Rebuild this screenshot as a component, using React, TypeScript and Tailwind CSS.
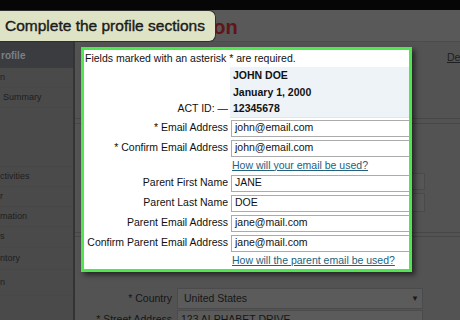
const sidebarItems = [
  { text: "n", h: "h-[20px]", pl: "pl-0" },
  { text: "Summary", h: "h-[20px]", pl: "pl-[3px]" },
  { text: "", h: "h-[59px]", pl: "pl-0" },
  { text: "ctivities", h: "h-[20px]", pl: "pl-0" },
  { text: "r", h: "h-[20px]", pl: "pl-0" },
  { text: "mation", h: "h-[20px]", pl: "pl-0" },
  { text: "s", h: "h-[21px]", pl: "pl-0" },
  { text: "ntory", h: "h-[22px]", pl: "pl-0" },
  { text: "n", h: "h-[26px]", pl: "pl-0" },
];

const infoRows = [
  { label: "", value: "JOHN DOE", h: "h-[17px]" },
  { label: "", value: "January 1, 2000", h: "h-[17px]" },
  { label: "ACT ID: \u2014", value: "12345678", h: "h-[16px]" },
];

type Row = { kind: "input" | "link"; label?: string; value: string };

const formRows: Row[] = [
  { kind: "input", label: "* Email Address", value: "john@email.com" },
  { kind: "input", label: "* Confirm Email Address", value: "john@email.com" },
  { kind: "link", value: "How will your email be used?" },
  { kind: "input", label: "Parent First Name", value: "JANE" },
  { kind: "input", label: "Parent Last Name", value: "DOE" },
  { kind: "input", label: "Parent Email Address", value: "jane@mail.com" },
  { kind: "input", label: "Confirm Parent Email Address", value: "jane@mail.com" },
  { kind: "link", value: "How will the parent email be used?" },
];

function Sidebar() {
  return (
    <aside className="flex w-[75px] shrink-0 flex-col overflow-hidden border-r-2 border-[#343434] bg-[#4a4a4a] text-[9px] text-[#1e1e1e]">
      <div className="flex h-[26px] items-center bg-[#3a3c3f] pl-px text-[10px] font-bold text-[#7b8086]">rofile</div>
      {sidebarItems.map((it, i) => (
        <div key={i} className={`flex ${it.h} ${it.pl} items-center whitespace-nowrap border-b border-[#474747]`}>
          {it.text}
        </div>
      ))}
    </aside>
  );
}

function Panel() {
  return (
    <div className="absolute left-[6px] top-[5px] h-[225px] w-[331px] overflow-hidden border-[3px] border-[#4fe64f] bg-white text-[10.5px] text-[#111] shadow-[3px_3px_5px_rgba(0,0,0,0.55)]">
      <div className="flex h-[17px] items-center pl-px whitespace-nowrap">
        Fields marked with an asterisk * are required.
      </div>
      {infoRows.map((r, i) => (
        <div key={i} className={`flex ${r.h} items-center`}>
          <div className="w-[144px] shrink-0 text-right whitespace-nowrap">{r.label}</div>
          <div className="ml-[2px] flex h-full flex-1 items-center bg-[#eef3f7] pl-[3px] font-bold">{r.value}</div>
        </div>
      ))}
      <div className="ml-[146px] h-px bg-[#ebe6d2]" />
      {formRows.map((r, i) =>
        r.kind === "input" ? (
          <div key={i} className="flex h-[20px] items-center">
            <div className="w-[144px] shrink-0 text-right whitespace-nowrap">{r.label}</div>
            <div className="ml-[3px] flex h-[17px] w-[190px] shrink-0 items-center border border-[#ababab] bg-white pl-[3px]">
              {r.value}
            </div>
          </div>
        ) : (
          <div key={i} className="flex h-[15px] items-center pl-[148px]">
            <a className="whitespace-nowrap text-[#21627e] underline">{r.value}</a>
          </div>
        )
      )}
    </div>
  );
}

function BackgroundForm() {
  return (
    <div className="flex flex-col text-[10.5px] text-[#161616]">
      <div className="mt-[6px] flex h-[20px] items-center pl-[372px]">
        <a className="whitespace-nowrap text-[#1f1f1f] underline">Details</a>
      </div>
      <div className="mt-[50px] h-[6px] border-y border-[#474747]" />
      <div className="mt-[49px] flex h-[17px] items-center">
        <div className="w-[97px] shrink-0" />
        <div className="ml-[5px] h-full w-[248px] shrink-0 border border-[#4a4a4a] bg-[#565656]" />
      </div>
      <div className="mt-[3px] flex h-[19px] items-center">
        <div className="w-[97px] shrink-0" />
        <div className="ml-[5px] h-full w-[248px] shrink-0 border border-[#4a4a4a] bg-[#565656]" />
      </div>
      <div className="mt-[20px] h-[5px] border-y border-[#474747]" />
      <div className="mt-[51px] flex h-[21px] items-center">
        <div className="w-[97px] shrink-0 text-right whitespace-nowrap">* Country</div>
        <div className="ml-[5px] flex h-full w-[246px] shrink-0 items-center justify-between border border-[#4b4b4b] bg-[#5b5b5b] pl-[6px] pr-[3px]">
          <span className="whitespace-nowrap">United States</span>
          <span className="text-[8px] text-[#1a1a1a]">{"\u25BC"}</span>
        </div>
      </div>
      <div className="mt-px flex h-[20px] items-center">
        <div className="w-[97px] shrink-0 text-right whitespace-nowrap">* Street Address</div>
        <div className="ml-[5px] flex h-full w-[246px] shrink-0 items-center border border-[#4b4b4b] bg-[#5b5b5b] pl-[3px]">
          <span className="whitespace-nowrap">123 ALPHABET DRIVE</span>
        </div>
      </div>
    </div>
  );
}

export default function App() {
  return (
    <div className="relative flex h-[320px] w-[460px] flex-col overflow-hidden bg-[#535353] font-['Liberation_Sans',Arial,sans-serif]">
      <div className="h-[10px] shrink-0 bg-[#060606]" />
      <header className="flex h-[32px] shrink-0 items-end border-b border-[#4b4b4b] bg-[#595959] pb-[2px] pl-[121px]">
        <h1 className="whitespace-nowrap text-[20px] font-bold leading-[24px] text-[#5e1616]">Registration</h1>
      </header>
      <div className="flex flex-1">
        <Sidebar />
        <main className="relative flex-1 overflow-hidden">
          <BackgroundForm />
          <Panel />
        </main>
      </div>
      <div className="absolute left-0 top-[10px] flex h-[32px] w-[216px] items-center rounded-r-[7px] border border-l-0 border-[#2f2f2f] bg-[#dee3c6] pl-[5px]">
        <span className="whitespace-nowrap text-[15.5px] text-[#1b1b1b] [-webkit-text-stroke:0.4px_#1b1b1b]">Complete the profile sections</span>
      </div>
    </div>
  );
}
